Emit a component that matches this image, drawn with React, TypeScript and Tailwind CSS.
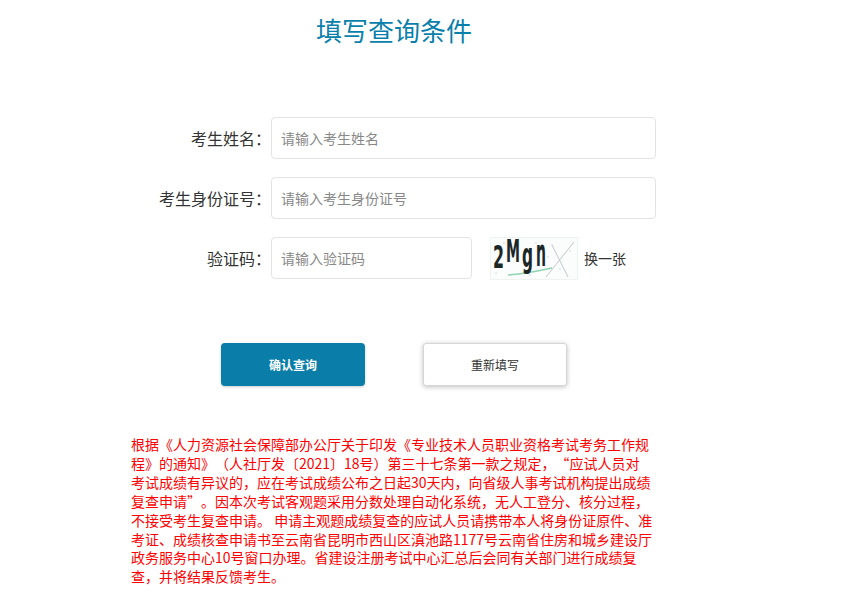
import React from "react";

const noticeLines = [
  "根据《人力资源社会保障部办公厅关于印发《专业技术人员职业资格考试考务工作规",
  "程》的通知》（人社厅发〔2021〕18号）第三十七条第一款之规定，“应试人员对",
  "考试成绩有异议的，应在考试成绩公布之日起30天内，向省级人事考试机构提出成绩",
  "复查申请”。因本次考试客观题采用分数处理自动化系统，无人工登分、核分过程，",
  "不接受考生复查申请。 申请主观题成绩复查的应试人员请携带本人将身份证原件、准",
  "考证、成绩核查申请书至云南省昆明市西山区滇池路1177号云南省住房和城乡建设厅",
  "政务服务中心10号窗口办理。省建设注册考试中心汇总后会同有关部门进行成绩复",
  "查，并将结果反馈考生。",
];

function Captcha() {
  return (
    <svg width="88" height="43" viewBox="0 0 88 43" overflow="visible" className="block">
      <rect width="88" height="43" fill="#fafdfc" />
      <rect x="0.5" y="0.5" width="87" height="42" fill="none" stroke="#eef3f1" />
      {/* noise dots */}
      <g fill="#bcd6cd">
        <circle cx="14" cy="6" r="0.7" />
        <circle cx="62" cy="8" r="0.7" />
        <circle cx="70" cy="32" r="0.7" />
        <circle cx="40" cy="38" r="0.7" />
        <circle cx="58" cy="20" r="0.7" />
        <circle cx="6" cy="36" r="0.7" />
        <circle cx="80" cy="14" r="0.7" />
        <circle cx="46" cy="6" r="0.7" />
      </g>
      {/* interference lines */}
      <path d="M56 40 L84 5" stroke="#c2c6ca" strokeWidth="1" fill="none" />
      <path d="M62 8 L78 40" stroke="#c2c6ca" strokeWidth="1" fill="none" />
      <path d="M18 38 C30 37 44 35 62 31" stroke="#8fd3b0" strokeWidth="1.3" fill="none" />
      <g fontFamily="'DejaVu Sans', sans-serif" fontWeight="700" fill="#1b2626">
        <text x="3" y="31" fontSize="32" textLength="11" lengthAdjust="spacingAndGlyphs">2</text>
        <text x="16" y="25" fontSize="32" textLength="14" lengthAdjust="spacingAndGlyphs">M</text>
        <text x="32" y="30" fontSize="33" textLength="11" lengthAdjust="spacingAndGlyphs">g</text>
        <text x="46" y="29" fontSize="38" textLength="10" lengthAdjust="spacingAndGlyphs">n</text>
      </g>
    </svg>
  );
}

function Field({
  label,
  placeholder,
  narrow,
  children,
}: {
  label: string;
  placeholder: string;
  narrow?: boolean;
  children?: React.ReactNode;
}) {
  return (
    <div className="flex h-[42px] items-center">
      <label className="w-[271px] shrink-0 text-right text-[16px] text-[#333]">
        {label}
      </label>
      <input
        placeholder={placeholder}
        className={`${
          narrow ? "w-[201px]" : "w-[385px]"
        } h-[42px] rounded-[4px] border border-[#e3e3e3] bg-white px-[9px] text-[14px] text-[#333] outline-none placeholder:text-[#888]`}
      />
      {children}
    </div>
  );
}

export default function App() {
  return (
    <div
      lang="zh-CN"
      className="min-h-[603px] w-[852px] bg-white pt-[12px] [text-spacing-trim:space-all]"
      style={{ fontFamily: "'Noto Sans CJK SC', 'Noto Sans', sans-serif" }}
    >
      <h1 className="w-[788px] text-center text-[26px] leading-[36px] font-normal text-[#0b7fab]">
        填写查询条件
      </h1>

      <div className="mt-[69px] flex flex-col gap-[18px]">
        <Field label="考生姓名：" placeholder="请输入考生姓名" />
        <Field label="考生身份证号：" placeholder="请输入考生身份证号" />
        <Field label="验证码：" placeholder="请输入验证码" narrow>
          <div className="ml-[18px] flex items-center gap-[6px]">
            <Captcha />
            <span className="text-[14px] text-[#333]">换一张</span>
          </div>
        </Field>
      </div>

      <div className="mt-[64px] flex gap-[58px] pl-[221px]">
        <button className="h-[43px] w-[144px] rounded-[4px] bg-[#0a7ea8] text-[12px] font-bold text-white shadow-[0_1px_3px_rgba(0,0,0,0.2)]">
          确认查询
        </button>
        <button className="h-[43px] w-[144px] rounded-[3px] border border-[#d6d6d6] bg-white text-[12px] text-[#333] shadow-[0_1px_5px_rgba(0,0,0,0.25)]">
          重新填写
        </button>
      </div>

      <div className="mt-[49px] pl-[131px] text-[14px] leading-[18.9px] text-[#ff0000]">
        {noticeLines.map((line) => (
          <div key={line} className="whitespace-nowrap">
            {line}
          </div>
        ))}
      </div>
    </div>
  );
}
